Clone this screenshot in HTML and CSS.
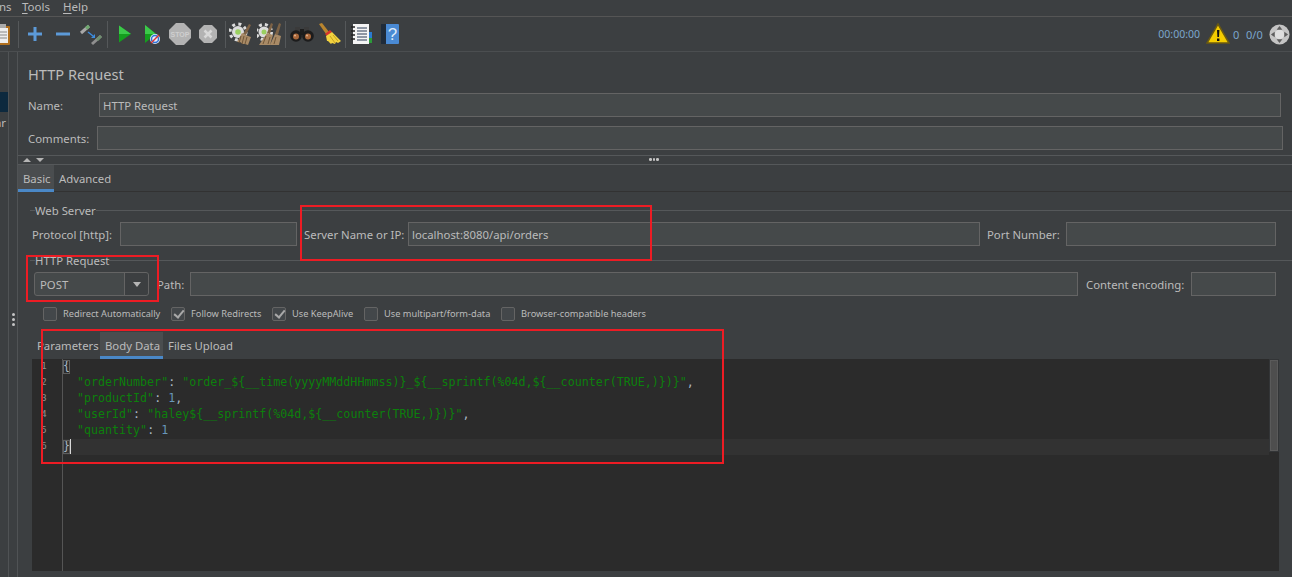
FILE: index.html
```html
<!DOCTYPE html>
<html lang="en">
<head>
<meta charset="utf-8">
<title>HTTP Request</title>
<link rel="stylesheet" href="styles.css">
</head>
<body>
<div class="app">
  <div class="menubar"><span class="menu-cut">ns</span><span class="menu-tools"><u>T</u>ools</span><span class="menu-help"><u>H</u>elp</span></div>
  <div class="toolbar">
    <svg class="clip" viewBox="0 0 11 22"><rect x="-8" y="2" width="18" height="19" rx="1" fill="#b06f1e"/><rect x="-6" y="4" width="14" height="15" fill="#eee"/><path d="M-3 0h9v4h-9z" fill="#aaa"/><path d="M0 8h7M0 11h7M0 14h7" stroke="#888"/></svg>
    <i class="sep"></i>
    <button class="tb g1"><svg viewBox="0 0 24 24"><path d="M12 5v14M5 12h14" stroke="#5c9ad8" stroke-width="3"/></svg></button>
    <button class="tb g1"><svg viewBox="0 0 24 24"><path d="M5 12h14" stroke="#5c9ad8" stroke-width="3"/></svg></button>
    <button class="tb g1"><svg viewBox="0 0 24 24"><path d="M2 11l8-7" stroke="#a8a8a8" stroke-width="3"/><path d="M7 6.500l3-2.500" stroke="#6ea96e" stroke-width="3"/><path d="M9 10l5 4" stroke="#3d8de0" stroke-width="1.500"/><path d="M12 16l4 0 0-4z" fill="#3d8de0"/><path d="M13 22l9-8" stroke="#8f8f8f" stroke-width="3"/><path d="M18 18l4-4" stroke="#6f8f6f" stroke-width="3"/></svg></button>
    <i class="sep sep2"></i>
    <button class="tb g2"><svg viewBox="0 0 24 24"><path d="M6 3.500l12 8.500-12 8.500z" fill="#149e1e"/><path d="M6 3.500l12 8.500H6z" fill="#3cc94a"/></svg></button>
    <button class="tb g2"><svg viewBox="0 0 24 24"><path d="M5 3l11 9-11 9z" fill="#149e1e"/><path d="M5 3l11 9H5z" fill="#3cc94a"/><circle cx="15" cy="17" r="5" fill="#e8eefa"/><circle cx="15" cy="17" r="3.500" fill="none" stroke="#2f73d8" stroke-width="1.500"/><path d="M11 21l8-8" stroke="#d83232" stroke-width="1.500"/></svg></button>
    <button class="tb g2 wide"><svg viewBox="0 0 24 24"><path d="M8 1h8l7 7v8l-7 7H8l-7-7V8z" fill="#b3b3b3"/><text class="stop-text" x="12" y="15">STOP</text></svg></button>
    <button class="tb g2"><svg viewBox="0 0 24 24"><path d="M8 3h8l5 5v8l-5 5H8l-5-5V8z" fill="#b3b3b3"/><path d="M8.500 8.500l7 7M15.500 8.500l-7 7" stroke="#d8d8d8" stroke-width="2.500"/></svg></button>
    <i class="sep sep3"></i>
    <button class="tb g3"><svg viewBox="0 0 24 24"><circle cx="9" cy="10" r="6" fill="#dcdcdc"/><circle cx="9" cy="10" r="8" fill="none" stroke="#dcdcdc" stroke-width="3" stroke-dasharray="3 3.300"/><circle cx="9" cy="10" r="2.800" fill="#9ad060"/><path d="M20 2l2 1-5 10-3-1z" fill="#7d6245"/><path d="M13 11l6 3 3 1-3 8-3-1-2 0-3-2-3 0z" fill="#a88a66"/><path d="M12 14l-2 7M15 14l-2 8M18 15l-2 7" stroke="#6f5638"/></svg></button>
    <button class="tb g3"><svg viewBox="0 0 24 24"><circle cx="7" cy="10" r="5.500" fill="#dcdcdc"/><circle cx="7" cy="10" r="7.500" fill="none" stroke="#dcdcdc" stroke-width="3" stroke-dasharray="3 3"/><circle cx="7" cy="10" r="2.500" fill="#9ad060"/><path d="M14 1l2 1-3 10-3-1zM22 1l2 1-3 11-3-1z" fill="#7d6245"/><path d="M10 11l6 2-3 10H2zM18 12l6 2-2 9h-9z" fill="#a88a66"/><path d="M9 14l-3 8M13 15l-2 7M19 15l-2 7" stroke="#6f5638"/></svg></button>
    <i class="sep sep4"></i>
    <button class="tb g4"><svg viewBox="0 0 24 24"><path d="M5 5h5v6H5zM14 5h5v6h-5z" fill="#3a3a3a"/><path d="M10 7h4v6h-4z" fill="#1d1d1d"/><circle cx="6" cy="14" r="5.800" fill="#1c1c1c"/><circle cx="18" cy="14" r="5.800" fill="#1c1c1c"/><circle cx="6" cy="14.500" r="3" fill="#a9673a"/><circle cx="18" cy="14.500" r="3" fill="#a9673a"/><circle cx="5" cy="13.500" r="1" fill="#e3b48f"/><circle cx="17" cy="13.500" r="1" fill="#e3b48f"/></svg></button>
    <button class="tb g4"><svg viewBox="0 0 24 24"><path d="M1 2l3-1 7 9-3 2z" fill="#b9852e"/><path d="M7 12l5-4 2 2-5 4z" fill="#d8322a"/><path d="M8 14l6-4 9 9-3 2-2-1-1 2-3-1-1 1-3-3-1 0z" fill="#f3d33f"/><path d="M12 14l5 7M15 13l5 6" stroke="#c9a21f"/></svg></button>
    <i class="sep sep5"></i>
    <button class="tb g5"><svg viewBox="0 0 24 24"><rect x="3" y="2" width="16" height="20" fill="#f4f4f4"/><path d="M1 5h4M1 9h4M1 13h4M1 17h4" stroke="#222" stroke-width="1.500"/><path d="M7 6h10M7 9h10M7 12h10M7 15h10M7 18h10" stroke="#2a3a55"/><rect x="19" y="10" width="3" height="6" fill="#2b7bd0"/><rect x="19" y="16" width="3" height="5" fill="#2c9a3a"/></svg></button>
    <button class="tb g5"><svg viewBox="0 0 24 24"><rect x="3" y="2" width="18" height="20" rx="1" fill="#4a8ad4"/><rect x="3" y="2" width="5" height="20" fill="#1f2b3a"/><text class="help-text" x="14.500" y="18">?</text></svg></button>
    <div class="status">
      <span class="clock">00:00:00</span>
      <svg class="warn" viewBox="0 0 24 22"><path d="M12 1L23 20H1z" fill="#f4cc00" stroke="#6b5a10" stroke-width="1.500"/><path d="M11 7h2.400l-.4 7h-1.600zM11 15.500h2.400V18H11z" fill="#111"/></svg>
      <span class="count">0</span>
      <span class="ratio">0/0</span>
      <svg class="globe" viewBox="0 0 22 22"><circle cx="11" cy="11" r="10.500" fill="#c4c4c4"/><circle cx="11" cy="11" r="5" fill="#dedede"/><path d="M11 2l3 4H8zM11 20l3-4H8zM2 11l4-3v6zM20 11l-4-3v6z" fill="#5d5d5d"/></svg>
    </div>
  </div>
  <div class="main">
    <aside class="tree"><div class="tree-selected"></div><div class="tree-text">ar</div></aside>
    <div class="divider"><span class="dots"><b></b><b></b><b></b></span></div>
    <section class="panel">
      <h1 class="title">HTTP Request</h1>
      <div class="row name-row"><label class="lbl-name">Name:</label><div class="field">HTTP Request</div></div>
      <div class="row comments-row"><label class="lbl-comments">Comments:</label><div class="field"></div></div>
      <div class="split"><i class="arrow-up"></i><i class="arrow-down"></i><span class="split-dots"><b></b><b></b><b></b></span></div>
      <div class="tabs"><span class="tab active">Basic</span><span class="tab">Advanced</span></div>

      <div class="group-title first"><span>Web Server</span></div>
      <div class="row form-row">
        <label class="lbl-protocol">Protocol [http]:</label><div class="field f-protocol"></div>
        <label class="lbl-server">Server Name or IP:</label><div class="field f-server">localhost:8080/api/orders</div>
        <label class="lbl-port">Port Number:</label><div class="field f-port"></div>
      </div>
      <div class="group-title second"><span>HTTP Request</span></div>
      <div class="row form-row">
        <div class="combo"><span class="combo-value">POST</span><span class="combo-btn"><i></i></span></div>
        <label class="lbl-path">Path:</label><div class="field f-path"></div>
        <label class="lbl-enc">Content encoding:</label><div class="field f-enc"></div>
      </div>
      <div class="checks">
        <label class="check c1"><i class="box"></i>Redirect Automatically</label>
        <label class="check c2"><i class="box on"></i>Follow Redirects</label>
        <label class="check c3"><i class="box on"></i>Use KeepAlive</label>
        <label class="check c4"><i class="box"></i>Use multipart/form-data</label>
        <label class="check c5"><i class="box"></i>Browser-compatible headers</label>
      </div>
      <div class="subtabs"><span class="subtab sub-params">Parameters</span><span class="subtab active">Body Data</span><span class="subtab">Files Upload</span></div>
      <div class="editor">
        <div class="gutter"><div>1</div><div>2</div><div>3</div><div>4</div><div>5</div><div>6</div></div>
        <div class="code">
<div class="line"><span class="brace-match">{</span></div>
<div class="line">  <span class="s">"orderNumber"</span><span class="p">:</span> <span class="s">"order_${__time(yyyyMMddHHmmss)}_${__sprintf(%04d,${__counter(TRUE,)})}"</span><span class="p">,</span></div>
<div class="line">  <span class="s">"productId"</span><span class="p">:</span> <span class="n">1</span><span class="p">,</span></div>
<div class="line">  <span class="s">"userId"</span><span class="p">:</span> <span class="s">"haley${__sprintf(%04d,${__counter(TRUE,)})}"</span><span class="p">,</span></div>
<div class="line">  <span class="s">"quantity"</span><span class="p">:</span> <span class="n">1</span></div>
<div class="line current"><span class="brace-match">}</span><i class="caret"></i></div>
        </div>
        <div class="vscroll"><div class="thumb"></div></div>
      </div>
    </section>
  </div>
  <div class="mark mark-server"></div>
  <div class="mark mark-method"></div>
  <div class="mark mark-body"></div>
</div>
</body>
</html>
```
FILE: styles.css
```css
* { box-sizing: border-box; }
html, body { margin: 0; padding: 0; height: 100%; overflow: hidden; background: #3c3f41; }
body { font-family: "Noto Sans", "Open Sans", sans-serif; font-size: 11.350px; color: #bbbbbb; }
.app { position: relative; width: 1292px; height: 577px; overflow: hidden; display: flex; flex-direction: column; }

/* menu */
.menubar { height: 17px; border-bottom: 1px solid #555555; display: flex; line-height: 13px; font-size: 11.500px; }
.menu-cut { margin-left: -1px; width: 23px; }
.menu-tools { width: 41px; }
.menubar u { text-underline-offset: 2px; }

/* toolbar */
.toolbar { height: 35px; border-bottom: 1px solid #4b4e50; display: flex; align-items: center; }
.clip { width: 11px; height: 22px; flex: none; margin-top: 1px; }
.sep { width: 1px; height: 27px; background: #55585a; flex: none; margin-left: 7px; margin-right: 2px; }
.sep2 { margin-left: 2px; margin-right: 4px; }
.sep3 { margin-left: 3px; margin-right: 1px; }
.sep4 { margin-left: 2px; margin-right: 2px; }
.sep5 { margin-left: 1px; margin-right: 2px; }
.tb { width: 28px; height: 24px; padding: 0; border: 0; background: none; flex: none; display: flex; align-items: center; justify-content: center; }
.tb svg { width: 24px; height: 24px; display: block; }
.g2 { width: 26.500px; }
.g2.wide { width: 30px; }
.g3 { width: 28px; }
.g4 { width: 28px; }
.g5 { width: 28px; }
.stop-text { font-family: "Liberation Sans", sans-serif; font-size: 7px; font-weight: 700; fill: #cfcfcf; text-anchor: middle; }
.help-text { font-family: "Liberation Sans", sans-serif; font-size: 17px; fill: #dfeaf8; text-anchor: middle; }
.status { margin-left: auto; display: flex; align-items: center; color: #7ba6cc; padding-right: 2px; }
.clock { font-size: 10.500px; }
.warn { width: 24px; height: 22px; margin-left: 6px; margin-right: 3px; }
.count { width: 13px; font-size: 11px; }
.ratio { width: 23px; font-size: 11px; }
.globe { width: 21px; height: 21px; }

/* layout */
.main { flex: 1; display: flex; min-height: 0; }
.tree { width: 9px; border-right: 1px solid #505355; padding-top: 40px; overflow: hidden; flex: none; }
.tree-selected { height: 20px; background: #0d293e; }
.tree-text { margin-left: -5px; margin-top: 3px; line-height: 16px; }
.divider { width: 9px; border-right: 1px solid #505355; flex: none; display: flex; align-items: center; justify-content: center; padding-top: 9px; height: 525px; }
.dots { display: flex; flex-direction: column; gap: 2px; }
.dots b, .split-dots b { display: block; width: 3px; height: 3px; border-radius: 50%; background: #c4c4c4; }
.panel { flex: 1; min-width: 0; display: flex; flex-direction: column; }

.title { margin: 0; height: 41px; padding: 12px 0 0 10px; font-size: 14.600px; font-weight: 400; line-height: 20px; color: #bbbbbb; }
.row { display: flex; align-items: center; height: 24px; white-space: nowrap; }
.row label { padding-top: 1px; }
.field { height: 24px; background: #45494a; border: 1px solid #646464; line-height: 24px; padding-left: 3px; white-space: nowrap; flex: none; }
.name-row { padding-left: 10px; padding-right: 11px; }
.name-row .field { flex: 1; }
.lbl-name { width: 71px; }
.comments-row { margin-top: 9px; padding-left: 10px; padding-right: 9px; }
.comments-row .field { flex: 1; }
.lbl-comments { width: 69px; }

.split { margin-top: 5px; height: 10px; border-top: 1px solid #55585a; border-bottom: 1px solid #55585a; position: relative; display: flex; align-items: center; padding-left: 5px; gap: 5px; }
.arrow-up { width: 0; height: 0; border-left: 4px solid transparent; border-right: 4px solid transparent; border-bottom: 4px solid #b5b5b5; }
.arrow-down { width: 0; height: 0; border-left: 4px solid transparent; border-right: 4px solid transparent; border-top: 4px solid #b5b5b5; }
.split-dots { position: absolute; left: 631px; top: 2px; display: flex; gap: 1px; }
.split-dots b { width: 2.500px; height: 2.500px; }

.tabs { height: 27px; display: flex; border-bottom: 1px solid #323232; }
.tab { height: 27px; line-height: 27px; padding: 0 5px; }
.tab.active { width: 36px; background: #4a4d4f; border-bottom: 3px solid #4a88c7; overflow: hidden; white-space: nowrap; }

.group-title { height: 14px; display: flex; align-items: center; padding-left: 12px; }
.group-title::before { content: ""; width: 5px; height: 1px; background: #55585a; }
.group-title::after { content: ""; flex: 1; height: 1px; background: #55585a; }
.group-title span { line-height: 14px; padding-top: 2px; }
.group-title.first { margin-top: 11px; margin-bottom: 5px; }
.group-title.second { margin-top: 7px; margin-bottom: 5px; }

.form-row { padding-left: 14px; }
.lbl-protocol { width: 88px; }
.f-protocol { width: 177px; }
.lbl-server { margin-left: 7px; width: 104px; }
.f-server { width: 572px; }
.lbl-port { margin-left: 7px; width: 79px; }
.f-port { width: 210px; }
.combo { margin-left: 2px; width: 115px; height: 24px; display: flex; border: 1px solid #646464; border-radius: 3px; background: #45494a; flex: none; }
.combo-value { flex: 1; padding-left: 5px; line-height: 24px; }
.combo-btn { width: 24px; border-left: 1px solid #646464; display: flex; align-items: center; justify-content: center; background: #3c3f41; border-radius: 0 3px 3px 0; }
.combo-btn i { width: 0; height: 0; border-left: 4.500px solid transparent; border-right: 4.500px solid transparent; border-top: 5px solid #b5b5b5; }
.lbl-path { margin-left: 8px; width: 33px; }
.f-path { width: 888px; }
.lbl-enc { margin-left: 8px; width: 105px; }
.f-enc { width: 85px; }

.checks { margin-top: 11px; height: 14px; display: flex; font-size: 9.250px; line-height: 16px; }
.check { display: flex; align-items: center; white-space: nowrap; color: #bbbbbb; }
.box { width: 14px; height: 14px; border: 1px solid #646464; border-radius: 2px; background: #43474a; margin-right: 6px; position: relative; flex: none; }
.box.on::after { content: ""; position: absolute; left: 4px; top: 0; width: 4px; height: 8px; border-right: 2px solid #a9a9a9; border-bottom: 2px solid #a9a9a9; transform: rotate(40deg); }
.c1 { margin-left: 25px; width: 128px; }
.c2 { width: 101px; }
.c3 { width: 92px; }
.c4 { width: 137px; }

.subtabs { margin-top: 11px; height: 27px; display: flex; padding-left: 14px; }
.subtab { height: 27px; line-height: 27px; padding: 0 5px; white-space: nowrap; }
.sub-params { width: 68px; }
.subtab.active { width: 63px; background: #4a4d4f; border-bottom: 3px solid #4a88c7; }

.editor { margin-left: 14px; margin-right: 13px; height: 212px; background: #2b2b2b; display: flex; font-family: "DejaVu Sans Mono", monospace; font-size: 11.650px; }
.gutter { width: 31px; border-right: 1px solid #555555; padding-left: 9px; color: #909090; font-size: 9.500px; flex: none; }
.gutter div { height: 16px; line-height: 14px; }
.code { flex: 1; min-width: 0; }
.line { height: 16px; line-height: 14px; white-space: pre; color: #a9b7c6; }
.line.current { background: #323232; }
.s { color: #0c800c; }
.n { color: #6897bb; }
.p { color: #a9b7c6; }
.brace-match { display: inline-block; height: 14px; line-height: 13px; outline: 1px solid #5f5f5f; outline-offset: -1px; vertical-align: top; margin-top: 1px; }
.caret { display: inline-block; width: 1px; height: 15px; background: #d8d8d8; vertical-align: top; }
.vscroll { width: 10px; height: 93px; padding: 1px; background: #333537; flex: none; }
.thumb { height: 91px; width: 8px; background: #4e4e4e; border: 1px solid #5a5a5a; }

/* annotation rectangles drawn over the screenshot */
.mark { position: absolute; border: 2px solid #ed1c24; pointer-events: none; }
.mark-server { left: 300px; top: 205px; width: 352px; height: 56px; }
.mark-method { left: 26px; top: 255px; width: 133px; height: 47px; }
.mark-body { left: 41px; top: 329px; width: 683px; height: 135px; }
```
